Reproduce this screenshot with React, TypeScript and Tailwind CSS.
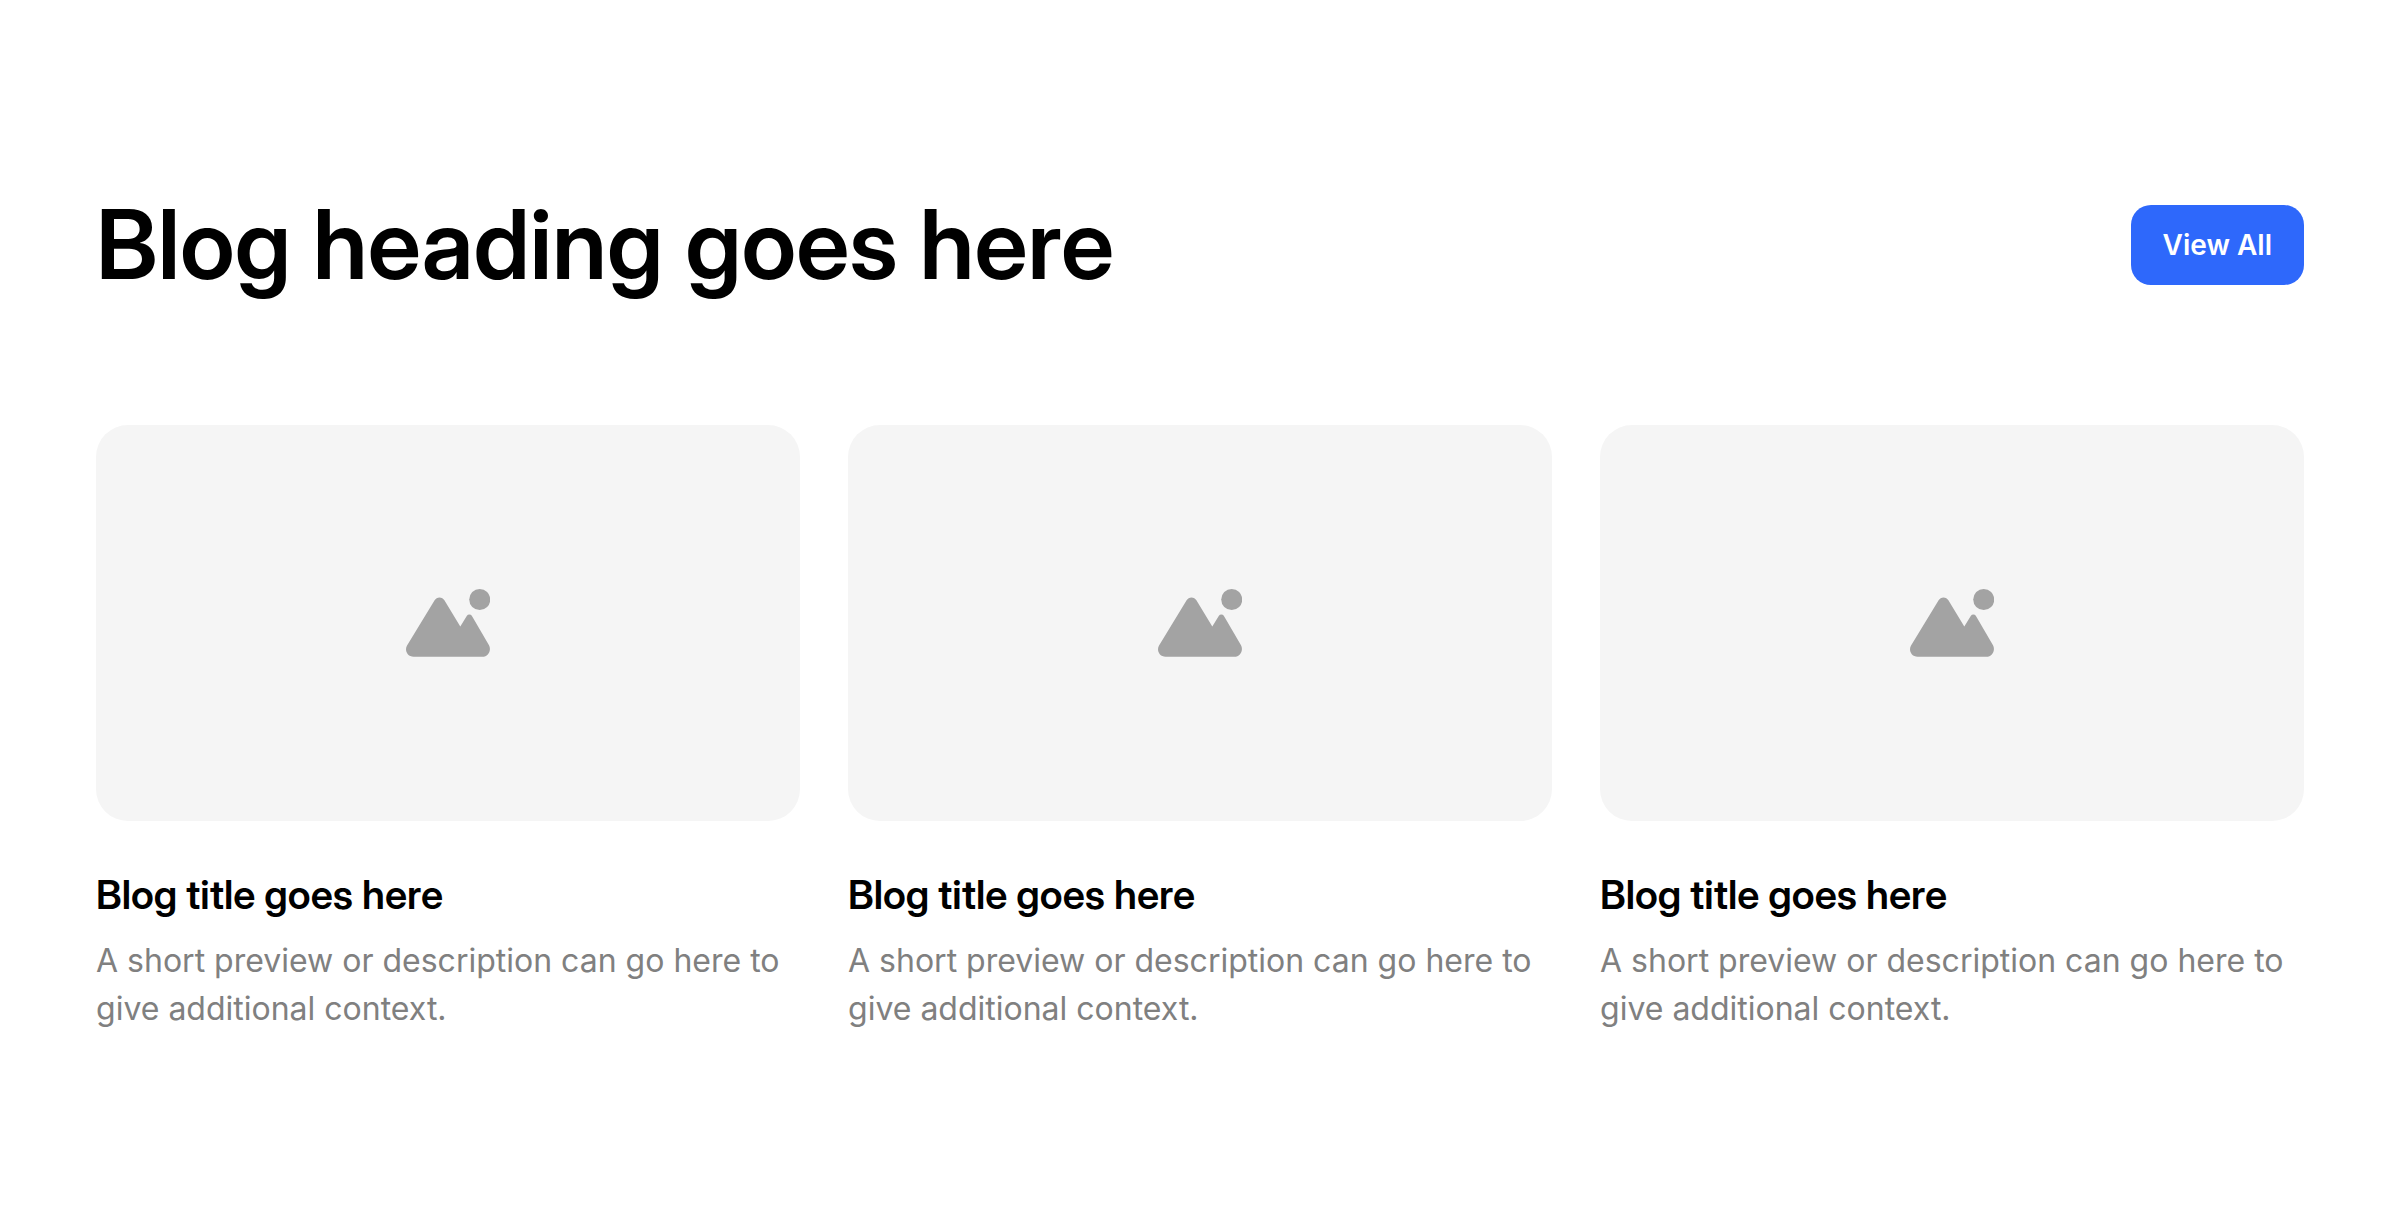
const posts = [
  {
    id: 1,
    title: "Blog title goes here",
    description: "A short preview or description can go here to give additional context.",
  },
  {
    id: 2,
    title: "Blog title goes here",
    description: "A short preview or description can go here to give additional context.",
  },
  {
    id: 3,
    title: "Blog title goes here",
    description: "A short preview or description can go here to give additional context.",
  },
]

function ImagePlaceholder() {
  return (
    <div className="flex aspect-video items-center justify-center rounded-[32px] bg-[#f5f5f5]">
      <svg width="84" height="68" viewBox="0 0 84 68" fill="#a3a3a3" aria-hidden="true">
        <circle cx="73.7" cy="10.5" r="10.5" />
        <path d="M28.6 11.2a5.7 5.7 0 0 1 9.8 0L54.3 37.5l6.6-10.7a2.9 2.9 0 0 1 4.9 0L83 56.3c2.7 5-.8 11.5-6.6 11.5H7.6C1.4 67.8-1.6 61.4.9 56.8Z" />
      </svg>
    </div>
  )
}

export default function App() {
  return (
    <section className="bg-white px-24 py-48 font-['Inter',sans-serif]">
      <div className="flex items-center justify-between gap-12">
        <h2 className="font-['Inter_Display','Inter',sans-serif] text-[96px] leading-[105px] font-semibold text-black">
          Blog heading goes here
        </h2>
        <button type="button" className="h-20 shrink-0 rounded-[20px] bg-[#2e68fb] px-8 text-[28px] font-semibold text-white">
          View All
        </button>
      </div>

      <div className="mt-32 grid grid-cols-3 gap-12">
        {posts.map((post) => (
          <article key={post.id}>
            <ImagePlaceholder />
            <h3 className="mt-12 font-['Inter_Display','Inter',sans-serif] text-[40px] leading-[52px] font-semibold text-black">
              {post.title}
            </h3>
            <p className="mt-4 text-[32px] leading-[48px] text-[#808080]">{post.description}</p>
          </article>
        ))}
      </div>
    </section>
  )
}
